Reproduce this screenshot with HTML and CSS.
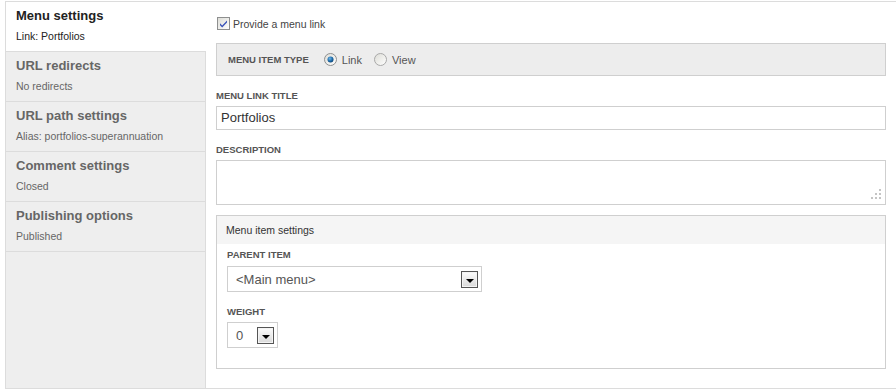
FILE: index.html
```html
<!DOCTYPE html>
<html>
<head>
<meta charset="utf-8">
<link rel="stylesheet" href="styles.css">
</head>
<body>
<div class="page">
  <div class="sidebar">
    <div class="tab active">
      <div class="tab-title">Menu settings</div>
      <div class="tab-sub">Link: Portfolios</div>
    </div>
    <div class="tab">
      <div class="tab-title">URL redirects</div>
      <div class="tab-sub">No redirects</div>
    </div>
    <div class="tab">
      <div class="tab-title">URL path settings</div>
      <div class="tab-sub">Alias: portfolios-superannuation</div>
    </div>
    <div class="tab">
      <div class="tab-title">Comment settings</div>
      <div class="tab-sub">Closed</div>
    </div>
    <div class="tab">
      <div class="tab-title">Publishing options</div>
      <div class="tab-sub">Published</div>
    </div>
  </div>
  <div class="content">
    <div class="check-row">
      <svg class="checkbox" width="13" height="13" viewBox="0 0 13 13">
        <defs>
          <linearGradient id="cbg" x1="0" y1="0" x2="1" y2="1">
            <stop offset="0" stop-color="#dcdcd6"/>
            <stop offset="1" stop-color="#ffffff"/>
          </linearGradient>
        </defs>
        <rect x="0.5" y="0.5" width="12" height="12" fill="url(#cbg)" stroke="#8e8f8f"/>
        <path d="M3 6.2 L5.2 8.6 L10 3.4 L10 5.4 L5.2 10.6 L3 8.2 Z" fill="#3a52b8"/>
      </svg>
      <span class="check-label">Provide a menu link</span>
    </div>
    <div class="type-box">
      <span class="label inline">Menu item type</span>
      <span class="radio-opt">
        <svg class="radio" width="13" height="13" viewBox="0 0 13 13">
          <defs>
            <linearGradient id="rbg" x1="0" y1="0" x2="1" y2="1">
              <stop offset="0" stop-color="#dcdcd6"/>
              <stop offset="1" stop-color="#ffffff"/>
            </linearGradient>
            <radialGradient id="rdot" cx="0.4" cy="0.35" r="0.7">
              <stop offset="0" stop-color="#6fb6e8"/>
              <stop offset="0.6" stop-color="#1d6aa8"/>
              <stop offset="1" stop-color="#0b3f70"/>
            </radialGradient>
          </defs>
          <circle cx="6.5" cy="6.5" r="6" fill="url(#rbg)" stroke="#8e8f8f"/>
          <circle cx="6.5" cy="6.5" r="3" fill="url(#rdot)"/>
        </svg>
        <span>Link</span>
      </span>
      <span class="radio-opt">
        <svg class="radio" width="13" height="13" viewBox="0 0 13 13">
          <circle cx="6.5" cy="6.5" r="6" fill="url(#rbg)" stroke="#a8a8a8"/>
        </svg>
        <span>View</span>
      </span>
    </div>
    <div class="label block first">Menu link title</div>
    <div class="text-input">Portfolios</div>
    <div class="label block">Description</div>
    <div class="textarea">
      <svg class="grip" width="12" height="12" viewBox="0 0 12 12">
        <rect x="9" y="0" width="2" height="2" fill="#c4c4c4"/>
        <rect x="5" y="4" width="2" height="2" fill="#c4c4c4"/>
        <rect x="9" y="4" width="2" height="2" fill="#c4c4c4"/>
        <rect x="1" y="8" width="2" height="2" fill="#c4c4c4"/>
        <rect x="5" y="8" width="2" height="2" fill="#c4c4c4"/>
        <rect x="9" y="8" width="2" height="2" fill="#c4c4c4"/>
      </svg>
    </div>
    <div class="fieldset">
      <div class="legend">Menu item settings</div>
      <div class="fs-body">
        <div class="label block fs-first">Parent item</div>
        <div class="select wide">
          <span class="select-text">&lt;Main menu&gt;</span>
          <span class="drop"><span class="tri"></span></span>
        </div>
        <div class="label block">Weight</div>
        <div class="select narrow">
          <span class="select-text">0</span>
          <span class="drop"><span class="tri"></span></span>
        </div>
      </div>
    </div>
  </div>
</div>
</body>
</html>
```

FILE: styles.css
```css
html, body {
  margin: 0;
  padding: 0;
  background: #fff;
  overflow: hidden;
}
body {
  font-family: "Liberation Sans", Arial, sans-serif;
  color: #333;
}
.page {
  display: flex;
  margin: 1px 0 0 5px;
  height: 388px;
  box-sizing: border-box;
  border: 1px solid #dcdcdc;
  border-right: none;
}
.sidebar {
  width: 200px;
  flex: none;
  box-sizing: border-box;
  background: #eeeeee;
  border-right: 1px solid #dcdcdc;
}
.tab {
  height: 50px;
  box-sizing: border-box;
  border-bottom: 1px solid #dcdcdc;
  padding: 6px 0 0 10px;
}
.tab.active {
  background: #fff;
  margin-right: -1px;
}
.tab-title {
  font-size: 13px;
  line-height: 16px;
  font-weight: bold;
  color: #666;
}
.tab-sub {
  margin-top: 5px;
  font-size: 10.5px;
  line-height: 14px;
  color: #666;
}
.tab.active .tab-title,
.tab.active .tab-sub {
  color: #222;
}
.content {
  flex: 1;
  padding: 0 10px;
  min-width: 0;
}
.check-row {
  display: flex;
  align-items: center;
  margin-top: 15px;
  height: 13px;
  margin-left: 1px;
}
.checkbox {
  display: block;
  flex: none;
}
.check-label {
  margin-left: 3px;
  font-size: 10.5px;
  color: #444;
}
.type-box {
  margin-top: 13px;
  height: 33px;
  box-sizing: border-box;
  border: 1px solid #cfcfcf;
  background: #ededed;
  display: flex;
  align-items: center;
  padding-left: 11px;
}
.label {
  font-size: 9.5px;
  font-weight: bold;
  text-transform: uppercase;
  color: #555;
  line-height: 12px;
}
.label.inline {
  margin-right: 15px;
}
.radio-opt {
  display: flex;
  align-items: center;
  font-size: 11px;
  color: #555;
  margin-right: 12px;
}
.radio {
  display: block;
  margin-right: 5px;
}
.label.block {
  margin-top: 14px;
  margin-bottom: 4px;
}
.text-input {
  height: 24px;
  box-sizing: border-box;
  border: 1px solid #cfcfcf;
  font-size: 13px;
  line-height: 22px;
  padding-left: 4px;
  color: #333;
}
.textarea {
  position: relative;
  height: 45px;
  box-sizing: border-box;
  border: 1px solid #cfcfcf;
}
.grip {
  position: absolute;
  right: 3px;
  bottom: 3px;
  display: block;
}
.fieldset {
  margin-top: 10px;
  height: 154px;
  box-sizing: border-box;
  border: 1px solid #cfcfcf;
}
.legend {
  height: 28px;
  background: #f5f5f5;
  font-size: 10.5px;
  line-height: 28px;
  padding-left: 9px;
  color: #333;
}
.fs-body {
  padding: 0 10px;
}
.label.fs-first {
  margin-top: 5px;
  margin-bottom: 5px;
}
.select {
  height: 26px;
  box-sizing: border-box;
  border: 1px solid #cfcfcf;
  display: flex;
  align-items: center;
  justify-content: space-between;
  padding: 0 3px 0 8px;
  font-size: 13px;
  color: #555;
}
.select.wide {
  width: 255px;
}
.select.narrow {
  width: 51px;
}
.drop {
  width: 17px;
  height: 17px;
  box-sizing: border-box;
  border: 1px solid #555;
  background: linear-gradient(#fdfdfd, #d9d9d9);
  display: flex;
  align-items: center;
  justify-content: center;
  box-shadow: inset 0 0 0 1px #f4f4f4;
}
.tri {
  width: 0;
  height: 0;
  border-left: 4px solid transparent;
  border-right: 4px solid transparent;
  border-top: 4px solid #000;
  margin-top: 3px;
}
```
